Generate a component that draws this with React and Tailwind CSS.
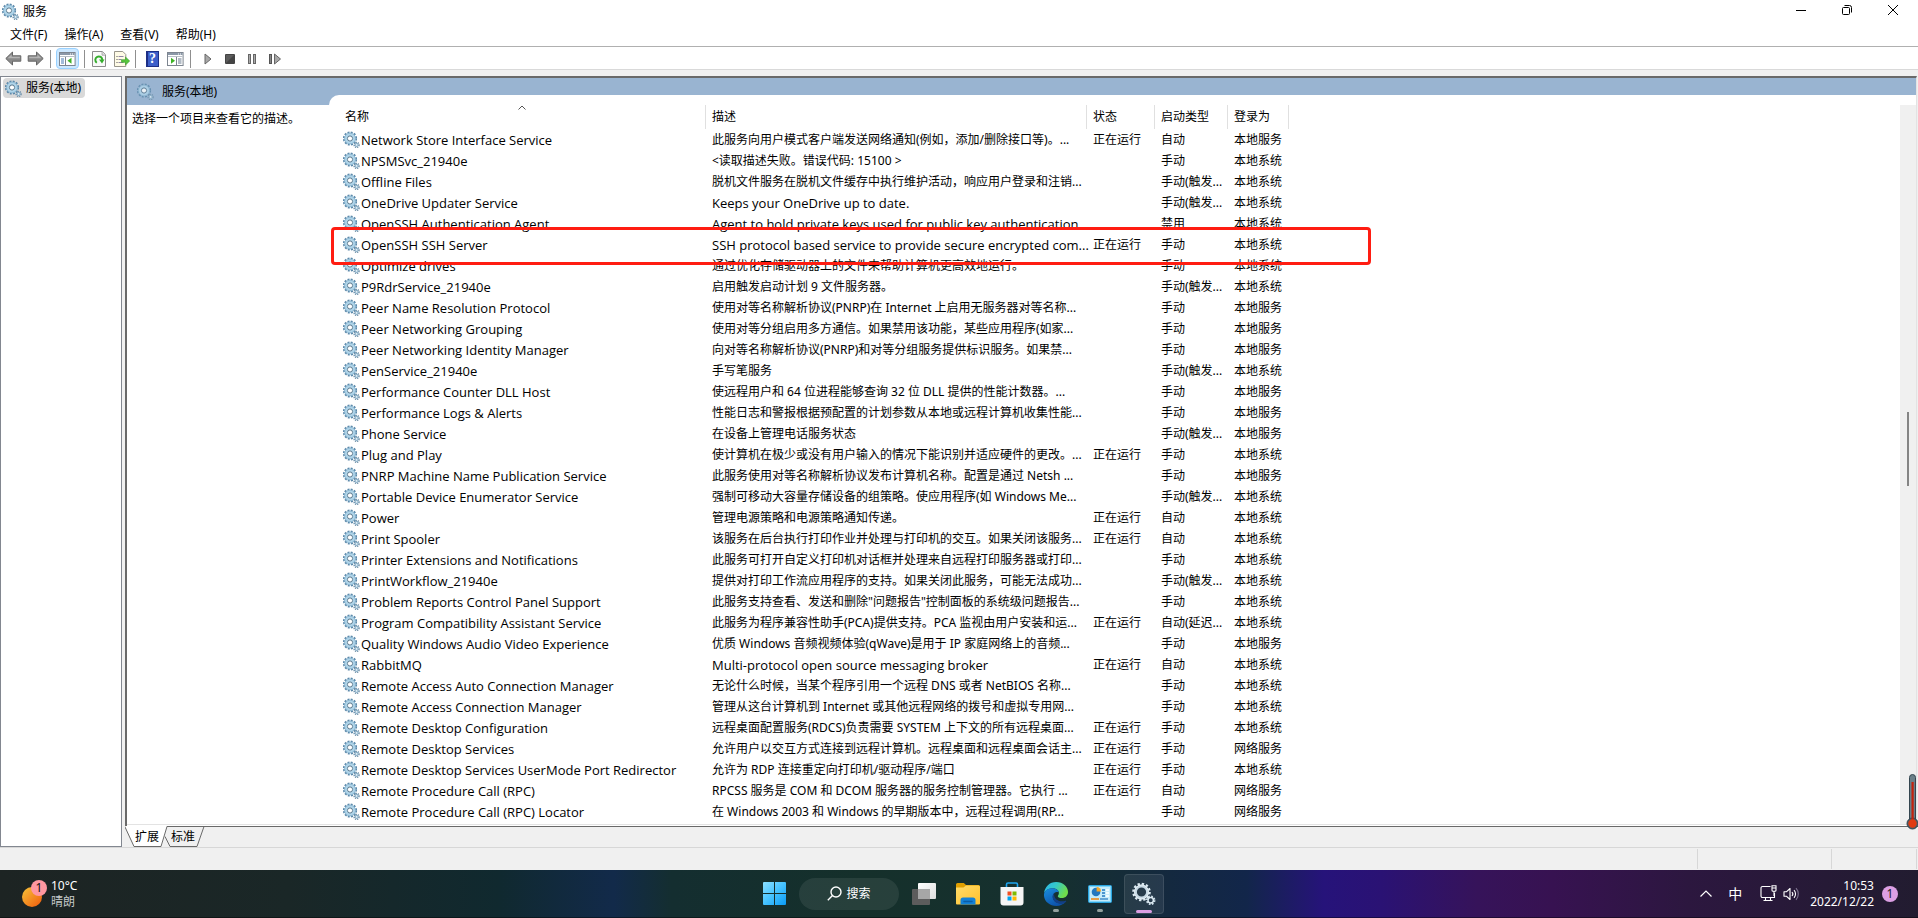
import React from "react";

const services = [
  ["Network Store Interface Service", "此服务向用户模式客户端发送网络通知(例如，添加/删除接口等)。...", "正在运行", "自动", "本地服务"],
  ["NPSMSvc_21940e", "<读取描述失败。错误代码: 15100 >", "", "手动", "本地系统"],
  ["Offline Files", "脱机文件服务在脱机文件缓存中执行维护活动，响应用户登录和注销...", "", "手动(触发...", "本地系统"],
  ["OneDrive Updater Service", "Keeps your OneDrive up to date.", "", "手动(触发...", "本地系统"],
  ["OpenSSH Authentication Agent", "Agent to hold private keys used for public key authentication.", "", "禁用", "本地系统"],
  ["OpenSSH SSH Server", "SSH protocol based service to provide secure encrypted com...", "正在运行", "手动", "本地系统"],
  ["Optimize drives", "通过优化存储驱动器上的文件来帮助计算机更高效地运行。", "", "手动", "本地系统"],
  ["P9RdrService_21940e", "启用触发启动计划 9 文件服务器。", "", "手动(触发...", "本地系统"],
  ["Peer Name Resolution Protocol", "使用对等名称解析协议(PNRP)在 Internet 上启用无服务器对等名称...", "", "手动", "本地服务"],
  ["Peer Networking Grouping", "使用对等分组启用多方通信。如果禁用该功能，某些应用程序(如家...", "", "手动", "本地服务"],
  ["Peer Networking Identity Manager", "向对等名称解析协议(PNRP)和对等分组服务提供标识服务。如果禁...", "", "手动", "本地服务"],
  ["PenService_21940e", "手写笔服务", "", "手动(触发...", "本地系统"],
  ["Performance Counter DLL Host", "使远程用户和 64 位进程能够查询 32 位 DLL 提供的性能计数器。...", "", "手动", "本地服务"],
  ["Performance Logs & Alerts", "性能日志和警报根据预配置的计划参数从本地或远程计算机收集性能...", "", "手动", "本地服务"],
  ["Phone Service", "在设备上管理电话服务状态", "", "手动(触发...", "本地服务"],
  ["Plug and Play", "使计算机在极少或没有用户输入的情况下能识别并适应硬件的更改。...", "正在运行", "手动", "本地系统"],
  ["PNRP Machine Name Publication Service", "此服务使用对等名称解析协议发布计算机名称。配置是通过 Netsh ...", "", "手动", "本地服务"],
  ["Portable Device Enumerator Service", "强制可移动大容量存储设备的组策略。使应用程序(如 Windows Me...", "", "手动(触发...", "本地系统"],
  ["Power", "管理电源策略和电源策略通知传递。", "正在运行", "自动", "本地系统"],
  ["Print Spooler", "该服务在后台执行打印作业并处理与打印机的交互。如果关闭该服务...", "正在运行", "自动", "本地系统"],
  ["Printer Extensions and Notifications", "此服务可打开自定义打印机对话框并处理来自远程打印服务器或打印...", "", "手动", "本地系统"],
  ["PrintWorkflow_21940e", "提供对打印工作流应用程序的支持。如果关闭此服务，可能无法成功...", "", "手动(触发...", "本地系统"],
  ["Problem Reports Control Panel Support", "此服务支持查看、发送和删除\"问题报告\"控制面板的系统级问题报告...", "", "手动", "本地系统"],
  ["Program Compatibility Assistant Service", "此服务为程序兼容性助手(PCA)提供支持。PCA 监视由用户安装和运...", "正在运行", "自动(延迟...", "本地系统"],
  ["Quality Windows Audio Video Experience", "优质 Windows 音频视频体验(qWave)是用于 IP 家庭网络上的音频...", "", "手动", "本地服务"],
  ["RabbitMQ", "Multi-protocol open source messaging broker", "正在运行", "自动", "本地系统"],
  ["Remote Access Auto Connection Manager", "无论什么时候，当某个程序引用一个远程 DNS 或者 NetBIOS 名称...", "", "手动", "本地系统"],
  ["Remote Access Connection Manager", "管理从这台计算机到 Internet 或其他远程网络的拨号和虚拟专用网...", "", "手动", "本地系统"],
  ["Remote Desktop Configuration", "远程桌面配置服务(RDCS)负责需要 SYSTEM 上下文的所有远程桌面...", "正在运行", "手动", "本地系统"],
  ["Remote Desktop Services", "允许用户以交互方式连接到远程计算机。远程桌面和远程桌面会话主...", "正在运行", "手动", "网络服务"],
  ["Remote Desktop Services UserMode Port Redirector", "允许为 RDP 连接重定向打印机/驱动程序/端口", "正在运行", "手动", "本地系统"],
  ["Remote Procedure Call (RPC)", "RPCSS 服务是 COM 和 DCOM 服务器的服务控制管理器。它执行 ...", "正在运行", "自动", "网络服务"],
  ["Remote Procedure Call (RPC) Locator", "在 Windows 2003 和 Windows 的早期版本中，远程过程调用(RP...", "", "手动", "网络服务"],
];

function Gears({ faded = false }) {
  return (
    <svg viewBox="0 0 17 17" className="size-[17px] shrink-0" opacity={faded ? 0.8 : 1} aria-hidden="true">
      <circle cx="7" cy="7.5" r="6" fill="none" stroke="#5b88a9" strokeWidth="2.2" strokeDasharray="1.9 1.24" />
      <circle cx="7" cy="7.5" r="4.2" fill="none" stroke="#b0d5ea" strokeWidth="3" />
      <circle cx="7" cy="7.5" r="5.4" fill="none" stroke="#7da9c6" strokeWidth="0.7" />
      <circle cx="7" cy="7.5" r="2.6" fill="#fff" stroke="#58798f" strokeWidth="1" />
      <circle cx="13.6" cy="13.9" r="2.4" fill="none" stroke="#6f90a8" strokeWidth="1.6" strokeDasharray="1.1 0.78" />
      <circle cx="13.6" cy="13.9" r="1.5" fill="#e8f3f9" stroke="#8bb0c8" strokeWidth="1.1" />
    </svg>
  );
}

function Arrow({ flip = false }) {
  return (
    <svg viewBox="0 0 17 15" className={flip ? "h-[15px] w-[17px] -scale-x-100" : "h-[15px] w-[17px]"} aria-hidden="true">
      <path d="M.8 7.5 7.5 1v3.8h8.3v5.4H7.5V14z" fill="#8a8a8a" stroke="#666" strokeWidth="1" />
      <path d="M2.6 7.3 6.6 3.4v2.4h8.2v1.5z" fill="#b4b4b4" />
    </svg>
  );
}

function ConsoleIcon({ flip = false }) {
  return (
    <svg viewBox="0 0 17 14" className="h-3.5 w-[17px]" aria-hidden="true">
      <rect x=".5" y=".5" width="15.6" height="13" fill="#fff" stroke="#7d8590" />
      <rect x="1" y="1" width="14.6" height="2" fill="#8b98a8" />
      <path d="M11 2h1M13 2h1" stroke="#fff" />
      <path d="M1 4.5h14.6" stroke="#b9c0c9" />
      {flip ? (
        <>
          <path d="M9.5 5v8" stroke="#7d8590" />
          <path d="M11 7h3.5M11 9h3.5M11 11h3.5" stroke="#66788c" />
          <path d="M4 5.8v6L8 8.8z" fill="#3db324" />
        </>
      ) : (
        <>
          <path d="M6.5 5v8" stroke="#7d8590" />
          <path d="M2 7h3M2 9h3M2 11h3" stroke="#4779b5" />
          <path d="M12.5 5.8v6l-4-3z" fill="#3db324" />
        </>
      )}
    </svg>
  );
}

function Separator() {
  return <span className="h-[18px] w-px bg-[#8f8f8f]" />;
}

function ToolButton({ label, className = "", children }) {
  return (
    <button type="button" aria-label={label} className={`flex h-[21px] items-center justify-center ${className}`}>
      {children}
    </button>
  );
}

function TitleBar() {
  return (
    <header className="flex h-6 items-start justify-between pr-0.5 pl-0.5">
      <div className="flex h-[23px] items-center gap-1">
        <Gears />
        <h1>服务</h1>
      </div>
      <div className="flex">
        <button type="button" aria-label="最小化" className="flex h-5 w-[46px] items-center justify-center">
          <svg viewBox="0 0 10 10" className="size-2.5"><path d="M0 5.5h10" stroke="#000" /></svg>
        </button>
        <button type="button" aria-label="向下还原" className="flex h-5 w-[46px] items-center justify-center">
          <svg viewBox="0 0 10 10" className="size-2.5" fill="none" stroke="#000"><rect x=".5" y="2.5" width="7" height="7" rx="1" /><path d="M2.5 .5h5a2 2 0 0 1 2 2v5" /></svg>
        </button>
        <button type="button" aria-label="关闭" className="flex h-5 w-[46px] items-center justify-center">
          <svg viewBox="0 0 10 10" className="size-2.5"><path d="m0 0 10 10M10 0 0 10" stroke="#000" /></svg>
        </button>
      </div>
    </header>
  );
}

function Toolbar() {
  return (
    <div className="flex h-6 items-center border-y border-t-[#b0b0b0] border-b-[#d9d9d9] pt-px pl-1">
      <ToolButton label="后退" className="w-[18px]"><Arrow /></ToolButton>
      <ToolButton label="前进" className="ml-1 mr-1.5 w-[18px]"><Arrow flip /></ToolButton>
      <Separator />
      <ToolButton label="显示/隐藏控制台树" className="mx-[5px] w-[23px] rounded-sm border border-[#99d1ff] bg-[#cce8ff]"><ConsoleIcon /></ToolButton>
      <Separator />
      <ToolButton label="刷新" className="ml-[5px] w-[18px]">
        <svg viewBox="0 0 14 16" className="h-4 w-3.5">
          <path d="M.5.5h9.8l3.2 3.2v11.8H.5z" fill="#fafafa" stroke="#8c8c8c" />
          <path d="M10 .8v3.4h3.2" fill="#ddd" stroke="#999" strokeWidth=".7" />
          <path d="M4.8 11.800A3.500 3.500 0 1 1 10.300 9" fill="none" stroke="#35ad2c" strokeWidth="2" />
          <path d="M7 8.500h5.500L10 12.500z" fill="#35ad2c" />
        </svg>
      </ToolButton>
      <ToolButton label="导出列表" className="ml-1 mr-[5px] w-[18px]">
        <svg viewBox="0 0 17 16" className="h-4 w-[17px]">
          <path d="M1.5.5h8.3l3 3v12H1.5z" fill="#fffbe6" stroke="#98958a" />
          <path d="M3.5 5.5h1M3.5 8.5h1M3.5 11.5h1" stroke="#555" />
          <path d="M5.5 5.5h5M5.5 8.5h3M5.5 11.5h5" stroke="#8f86a6" />
          <path d="M8.5 8.7h4V6l4.2 4-4.2 4v-2.7h-4z" fill="#57c63d" stroke="#3a9c28" strokeWidth=".6" />
        </svg>
      </ToolButton>
      <Separator />
      <ToolButton label="帮助" className="ml-[7px] w-[18px]">
        <span className="flex h-4 w-[13px] items-center justify-center border border-l-2 border-[#1d2f86] bg-[#3d5fc9] font-['Liberation_Serif',serif] text-sm leading-4 font-bold text-white">?</span>
      </ToolButton>
      <ToolButton label="显示/隐藏操作窗格" className="mx-[5px] w-[19px]"><ConsoleIcon flip /></ToolButton>
      <Separator />
      <ToolButton label="启动服务" className="ml-2 w-[18px]">
        <svg viewBox="0 0 8 12" className="h-3 w-2"><path d="M1 1v10l6-5z" fill="#a8a8a8" stroke="#666" /></svg>
      </ToolButton>
      <ToolButton label="停止服务" className="ml-1 w-[18px]">
        <svg viewBox="0 0 10 10" className="size-2.5"><rect width="10" height="10" rx="1" fill="#444" /><path d="M1 9V1h8z" fill="#5c5c5c" /></svg>
      </ToolButton>
      <ToolButton label="暂停服务" className="ml-1 w-[18px]">
        <svg viewBox="0 0 8 10" className="h-2.5 w-2" fill="#aaa" stroke="#666"><rect x=".5" y=".5" width="2" height="9" /><rect x="5.500" y=".5" width="2" height="9" /></svg>
      </ToolButton>
      <ToolButton label="重启动服务" className="ml-[5px] w-[18px]">
        <svg viewBox="0 0 12 12" className="size-3"><rect x=".5" y="1.500" width="2" height="9" fill="#888" stroke="#555" /><path d="M5.500 1v10l6-5z" fill="#a8a8a8" stroke="#666" /></svg>
      </ToolButton>
    </div>
  );
}

const headCell = "relative border-r border-[#e0e0e0] px-1.5 text-left font-normal whitespace-nowrap first:pl-[7px]";
const cell = "px-1.5 whitespace-nowrap";
const latinText = "font-['Open_Sans',sans-serif] text-[13px] leading-4";
const isLatin = (text) => /^[\x20-\x7e]+$/.test(text);

function ServiceTable() {
  return (
    <div className="relative flex-1 rounded-tl-[10px] bg-white pt-2.5 pl-[9px]">
      <table className="w-[951px] table-fixed border-separate border-spacing-0 leading-4">
        <colgroup>
          <col className="w-[368px]" />
          <col className="w-[381px]" />
          <col className="w-[68px]" />
          <col className="w-[73px]" />
          <col className="w-[61px]" />
        </colgroup>
        <thead>
          <tr className="h-6">
            <th className={headCell}>
              名称
              <svg viewBox="0 0 8 5" className="absolute inset-x-0 top-0 mx-auto h-[5px] w-2" aria-hidden="true"><path d="M.5 4.500 4 1l3.500 3.500" fill="none" stroke="#555" /></svg>
            </th>
            <th className={headCell}>描述</th>
            <th className={headCell}>状态</th>
            <th className={headCell}>启动类型</th>
            <th className={headCell}>登录为</th>
          </tr>
        </thead>
        <tbody>
          {services.map(([name, description, status, startup, account]) => (
            <tr key={name} className="h-[21px]">
              <td className="pl-[5px] whitespace-nowrap">
                <div className="flex items-center gap-px">
                  <Gears />
                  <span className={latinText}>{name}</span>
                </div>
              </td>
              <td className={cell}>
                <span className={isLatin(description) ? `block ${latinText}` : "block"}>{description}</span>
              </td>
              <td className={cell}>{status}</td>
              <td className={cell}>{startup}</td>
              <td className={cell}>{account}</td>
            </tr>
          ))}
        </tbody>
      </table>
      <div className="pointer-events-none absolute top-[132px] left-0.5 h-[38px] w-[1040px] rounded border-3 border-[#ff1d12]" />
    </div>
  );
}

function ViewTabs() {
  return (
    <div className="relative flex h-[21px] border-t border-[#696969] pl-2.5" role="tablist">
      <svg viewBox="0 0 80 21" className="absolute -top-px left-0 h-[21px] w-20" aria-hidden="true">
        <path d="M0 0h42l-5 20H9z" fill="#fff" />
        <path d="M42 .5h37L72 20H45l-5-9z" fill="#f0f0f0" />
        <path d="M0 1 9 20.500h27l6-20h37l-7 20H45l-5-10" fill="none" stroke="#696969" />
      </svg>
      <button type="button" role="tab" aria-selected="true" className="relative w-9 text-left">扩展</button>
      <button type="button" role="tab" aria-selected="false" className="relative w-9 text-left">标准</button>
    </div>
  );
}

function Thermometer() {
  return (
    <svg viewBox="0 0 12 56" className="absolute right-0 -bottom-1 h-14 w-3" aria-hidden="true">
      <rect x="3.500" y=".5" width="6" height="48" rx="3" fill="#6b7f88" stroke="#33454f" />
      <circle cx="6.500" cy="49.500" r="5.500" fill="#4b5f69" stroke="#33454f" />
      <path d="M5.500 8h2.200v38h-2.200z" fill="#c4220d" />
      <circle cx="6.500" cy="49.500" r="4.200" fill="#e03a12" />
    </svg>
  );
}

function TaskButton({ label, active = false, running = false, children }) {
  return (
    <button
      type="button"
      aria-label={label}
      className={`relative flex size-10 items-center justify-center rounded ${active ? "border border-white/10 bg-white/8" : ""}`}
    >
      {children}
      {running && <span className="absolute bottom-0.5 h-[3px] w-1.5 rounded-full bg-[#93a19f]" />}
      {active && <span className="absolute bottom-0 h-[3px] w-4 rounded-full bg-[#dc9fe4]" />}
    </button>
  );
}

function Taskbar() {
  return (
    <footer className="grid h-12 grid-cols-[1fr_auto_1fr] items-center border-b border-black/40 bg-[linear-gradient(90deg,#1d2423_0%,#1a2727_15%,#10292f_26%,#122a4a_32%,#142e30_35%,#15302b_45%,#16302f_55%,#14293f_61%,#12264a_65%,#26137a_69%,#2a1274_72%,#36135a_77%,#371251_81%,#2c173f_88%,#221c30_100%)] text-white">
      <button type="button" aria-label="天气" className="flex w-max items-center gap-1 pl-5 text-left leading-4">
        <svg viewBox="0 0 27 30" className="h-[30px] w-[27px]">
          <defs>
            <linearGradient id="sun" x1="0" y1="0" x2="1" y2="1">
              <stop offset="0" stopColor="#f7c53a" />
              <stop offset="1" stopColor="#f0590c" />
            </linearGradient>
          </defs>
          <circle cx="12" cy="18" r="10" fill="url(#sun)" />
          <circle cx="19" cy="9" r="8" fill="#ff97a0" />
          <text x="19" y="13" fontSize="12" textAnchor="middle" fill="#111">1</text>
        </svg>
        <span className="flex flex-col">
          <span>10°C</span>
          <span className="text-[#c4c9c8]">晴朗</span>
        </span>
      </button>

      <nav className="flex items-center gap-1">
        <TaskButton label="开始">
          <svg viewBox="0 0 23 23" className="size-[23px]">
            <defs>
              <linearGradient id="win" x1="0" y1="0" x2="1" y2="1">
                <stop offset="0" stopColor="#8be0ff" />
                <stop offset=".5" stopColor="#45c2ff" />
                <stop offset="1" stopColor="#0a9bf5" />
              </linearGradient>
            </defs>
            <path d="M1 0h10v11H0V1a1 1 0 0 1 1-1zM12 0h10a1 1 0 0 1 1 1v10H12zM0 12h11v11H1a1 1 0 0 1-1-1zM12 12h11v10a1 1 0 0 1-1 1H12z" fill="url(#win)" />
          </svg>
        </TaskButton>
        <button type="button" className="mx-px flex h-8 w-[100px] items-center justify-center gap-1 rounded-full bg-white/8">
          <svg viewBox="0 0 15 15" className="size-[15px]" fill="none" stroke="#fff" strokeWidth="1.400"><circle cx="9" cy="6" r="5" /><path d="m5.500 9.500-4.700 4.700" /></svg>
          搜索
        </button>
        <TaskButton label="任务视图">
          <svg viewBox="0 0 24 22" className="h-[22px] w-6">
            <defs>
              <linearGradient id="view" x1="0" y1="0" x2="1" y2="1"><stop offset="0" stopColor="#fff" /><stop offset="1" stopColor="#ddd" /></linearGradient>
            </defs>
            <rect x="6" width="18" height="16" rx="1" fill="url(#view)" />
            <rect y="6" width="18" height="16" rx="1" fill="#5c5c5c" />
            <path d="M6 6h12v10H6z" fill="#a6a6a6" />
          </svg>
        </TaskButton>
        <TaskButton label="文件资源管理器">
          <svg viewBox="0 0 24 22" className="h-[22px] w-6">
            <defs>
              <linearGradient id="folder" x1="0" y1="0" x2="1" y2="1"><stop offset="0" stopColor="#ffdc6b" /><stop offset="1" stopColor="#ffc02b" /></linearGradient>
            </defs>
            <path d="M0 1.500A1.500 1.500 0 0 1 1.500 0h6.300L10 2h12.500A1.500 1.500 0 0 1 24 3.500V8H0z" fill="#e09f00" />
            <path d="M0 4.500h7.500L10 2.500h12.500A1.500 1.500 0 0 1 24 4v16.500a1 1 0 0 1-1 1H1a1 1 0 0 1-1-1z" fill="url(#folder)" />
            <path d="M4.500 21.500V17a2.500 2.500 0 0 1 2.500-2.500h10a2.500 2.500 0 0 1 2.500 2.500v4.500z" fill="#1381d6" />
            <path d="M8 18.500h8" stroke="#0b5da6" strokeWidth="1.500" strokeLinecap="round" />
          </svg>
        </TaskButton>
        <TaskButton label="应用商店">
          <svg viewBox="0 0 24 24" className="size-6">
            <path d="M6.500 6V2.500A1.500 1.500 0 0 1 8 1h8a1.500 1.500 0 0 1 1.500 1.500V6" fill="none" stroke="#1fa5f0" strokeWidth="1.600" />
            <path d="M.5 5h23v15.500a3 3 0 0 1-3 3h-17a3 3 0 0 1-3-3z" fill="#f5f5f5" />
            <path d="M7.500 9.500h4v4h-4z" fill="#f25022" /><path d="M12.500 9.500h4v4h-4z" fill="#7fba00" />
            <path d="M7.500 14.500h4v4h-4z" fill="#00a4ef" /><path d="M12.500 14.500h4v4h-4z" fill="#ffb900" />
          </svg>
        </TaskButton>
        <TaskButton label="Microsoft Edge" running>
          <svg viewBox="0 0 24 24" className="size-6">
            <defs>
              <linearGradient id="edgeTop" x1="0" y1="0" x2="1" y2=".4"><stop offset="0" stopColor="#2bb5ee" /><stop offset=".5" stopColor="#35c8c8" /><stop offset="1" stopColor="#6fdc4b" /></linearGradient>
              <linearGradient id="edgeLow" x1="0" y1="0" x2=".6" y2="1"><stop offset="0" stopColor="#1a8fe0" /><stop offset="1" stopColor="#0c50a8" /></linearGradient>
            </defs>
            <path d="M0 11.500C.6 4.800 5.700 0 12.200 0 19 0 24 4.800 24 10c0 3.900-2.900 6-6 6-2.700 0-4.200-.9-4.200-1.800 0-.8 1.100-1.200 1.100-3.200 0-2.500-2.600-4.700-6.200-4.700C4.500 6.300 1.200 8.400 0 11.500z" fill="url(#edgeTop)" />
            <path d="M0 12.200C.7 8.500 4 6.300 8.200 6.300c3.700 0 6.300 1.900 6.500 4.200-1.200-1-5.900-.3-5.900 4.300 0 3.900 3.600 6.500 7.700 6.500 2 0 3.600-.5 5.300-1.500C19.600 22.500 16 24 12.400 24 5.200 24-.6 18.800 0 12.200z" fill="url(#edgeLow)" />
            <path d="M10.300 11.100c-1.700 1.600-2.200 4.200-1.100 6.500 1.400 3 4.400 4.200 7.300 4.100 2 0 4.300-.8 5.600-2.300.3-.4 0-.9-.5-.7-2 .8-4.300.9-6.500.2-3.200-1-5.600-3.900-4.800-7.800z" fill="#123f86" />
          </svg>
        </TaskButton>
        <TaskButton label="控制面板" running>
          <svg viewBox="0 0 24 18" className="h-[18px] w-6">
            <rect x=".5" y=".5" width="23" height="17" rx="1" fill="#7fd3f7" stroke="#2aa5df" />
            <rect x="2" y="2" width="20" height="14" fill="#c5ecfb" />
            <circle cx="8" cy="7" r="4.300" fill="#2478c0" />
            <path d="M8.600 6.600V2A4.500 4.500 0 0 1 13.100 6.600z" fill="#f4a62a" />
            <path d="M14 5h3M14 8h3M14 11h3" stroke="#2478c0" strokeWidth="1.500" />
            <path d="M18 5h3M18 8h3M18 11h3" stroke="#fff" strokeWidth="1.500" />
            <path d="M3 14h8" stroke="#ee8c1e" strokeWidth="1.600" /><path d="M12 14h8" stroke="#2478c0" strokeWidth="1.200" />
          </svg>
        </TaskButton>
        <TaskButton label="服务" active>
          <svg viewBox="0 0 24 24" className="size-6" fill="none">
            <circle cx="9.500" cy="10" r="8" stroke="#dbe9f1" strokeWidth="2.600" strokeDasharray="2.300 1.890" />
            <circle cx="9.500" cy="10" r="6" stroke="#c7d9e4" strokeWidth="2.800" />
            <circle cx="9.500" cy="10" r="7" stroke="#edf5f9" strokeWidth=".8" />
            <circle cx="18.700" cy="18.300" r="3.900" stroke="#cfe0ea" strokeWidth="1.800" strokeDasharray="1.700 1.360" />
            <circle cx="18.700" cy="18.300" r="2.700" stroke="#dceaf2" strokeWidth="1.500" />
          </svg>
        </TaskButton>
      </nav>

      <div className="flex items-center justify-end pr-5">
        <button type="button" aria-label="显示隐藏的图标" className="mr-3.5 flex h-8 w-4 items-center justify-center">
          <svg viewBox="0 0 12 7" className="h-[7px] w-3"><path d="m.5 6.500 5.500-5.500 5.500 5.500" fill="none" stroke="#fff" strokeWidth="1.200" /></svg>
        </button>
        <button type="button" aria-label="输入法" className="mr-[18px] text-sm">中</button>
        <button type="button" aria-label="网络和音量" className="mr-2.5 flex items-center gap-1.5">
          <svg viewBox="0 0 17 17" className="size-[17px]" fill="none" stroke="#fff" strokeWidth="1.100">
            <path d="M10.500 1.500h-8a1.500 1.500 0 0 0-1.500 1.500v8A1.500 1.500 0 0 0 2.500 12.500h12V8M5.500 12.500v3M10.500 12.500v3M3.500 15.500h9" />
            <path d="M12 .8h4v4.400a1 1 0 0 1-1 1h-2a1 1 0 0 1-1-1zM12 3h4M14 6.200V11" />
          </svg>
          <svg viewBox="0 0 17 14" className="h-3.5 w-[17px]" fill="none" stroke="#fff" strokeWidth="1.100">
            <path d="M1 4.700h2.600L7 1.500v11L3.600 9.300H1z" strokeLinejoin="round" />
            <path d="M9 5a3 3 0 0 1 0 4M11 3.200a5.500 5.500 0 0 1 0 7.600" />
            <path d="M13 1.200a8.500 8.500 0 0 1 0 11.600" stroke="#7d7390" />
          </svg>
        </button>
        <time dateTime="2022-12-22T10:53" className="mr-2 flex flex-col text-right leading-4">
          <span>10:53</span>
          <span>2022/12/22</span>
        </time>
        <span className="flex size-4 items-center justify-center rounded-full bg-[#dc9fe4] leading-4 text-[#222]">1</span>
      </div>
    </footer>
  );
}

export default function App() {
  return (
    <div className="flex min-h-screen flex-col bg-white font-['Noto_Sans','Noto_Sans_CJK_SC',sans-serif] text-xs leading-5 text-black">
      <TitleBar />
      <nav className="flex h-[22px] items-center gap-[17px] pl-2.5">
        <button type="button">文件(F)</button>
        <button type="button">操作(A)</button>
        <button type="button">查看(V)</button>
        <button type="button">帮助(H)</button>
      </nav>
      <Toolbar />

      <div className="flex flex-1 gap-[3px] bg-[#f0f0f0] pt-1.5">
        <aside className="w-[122px] border border-[#828790] bg-white pt-px pl-0.5">
          <button type="button" className="flex h-5 items-center gap-1 rounded-sm bg-[#d9d9d9] pr-1 pl-0.5">
            <Gears />
            服务(本地)
          </button>
        </aside>

        <main className="relative flex flex-1 flex-col">
          <section className="mr-px flex flex-1 flex-col border-t-2 border-r border-l-2 border-t-[#696969] border-r-[#e3e3e3] border-l-[#696969] bg-white">
            <div className="flex flex-1 bg-[linear-gradient(#99b4d1_27px,#fff_27px)]">
              <div className="w-[202px]">
                <h2 className="flex h-[27px] items-center gap-2 pl-2.5">
                  <Gears faded />
                  服务(本地)
                </h2>
                <p className="pt-1 pl-[5px]">选择一个项目来查看它的描述。</p>
              </div>
              <div className="flex flex-1 flex-col pt-[17px]">
                <div className="flex flex-1">
                  <ServiceTable />
                  <div className="flex w-4 flex-col bg-white pt-2.5">
                    <div className="flex flex-1 flex-col items-center bg-[#f0f0f0] pt-[307px]">
                      <div className="h-[74px] w-0.5 bg-[#858585]" />
                    </div>
                  </div>
                </div>
              </div>
            </div>
            <div className="h-0.5 border-t border-[#e3e3e3] bg-white" />
          </section>
          <ViewTabs />
          <div className="absolute right-0 bottom-[21px] size-0">
            <Thermometer />
          </div>
        </main>
      </div>

      <div className="flex h-[23px] justify-end border-t border-[#d7d7d7] bg-[#f0f0f0] py-px pr-px">
        <div className="w-[134px] border-l border-[#d7d7d7]" />
        <div className="w-[86px] border-x border-[#d7d7d7]" />
      </div>
      <Taskbar />
    </div>
  );
}
